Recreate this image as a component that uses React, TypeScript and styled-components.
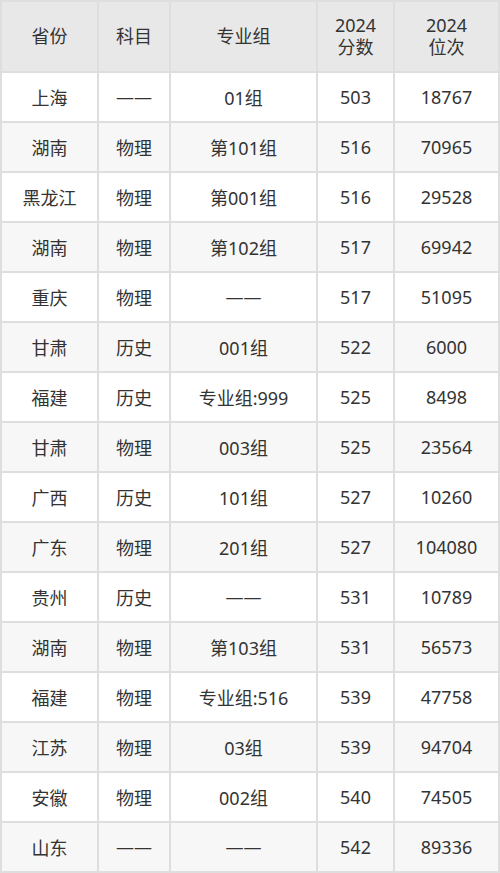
import React from 'react'
import styled, { createGlobalStyle } from 'styled-components'

const GlobalStyle = createGlobalStyle`
    html, body {
        margin: 0;
        padding: 0;
        background: #ffffff;
    }
`

const headers = ['省份', '科目', '专业组', '2024\n分数', '2024\n位次']

const rows: string[][] = [
    ['上海', '——', '01组', '503', '18767'],
    ['湖南', '物理', '第101组', '516', '70965'],
    ['黑龙江', '物理', '第001组', '516', '29528'],
    ['湖南', '物理', '第102组', '517', '69942'],
    ['重庆', '物理', '——', '517', '51095'],
    ['甘肃', '历史', '001组', '522', '6000'],
    ['福建', '历史', '专业组:999', '525', '8498'],
    ['甘肃', '物理', '003组', '525', '23564'],
    ['广西', '历史', '101组', '527', '10260'],
    ['广东', '物理', '201组', '527', '104080'],
    ['贵州', '历史', '——', '531', '10789'],
    ['湖南', '物理', '第103组', '531', '56573'],
    ['福建', '物理', '专业组:516', '539', '47758'],
    ['江苏', '物理', '03组', '539', '94704'],
    ['安徽', '物理', '002组', '540', '74505'],
    ['山东', '——', '——', '542', '89336'],
]

export default function App() {
    return (
        <>
            <GlobalStyle />
            <Table>
                {headers.map((h) => (
                    <HeadCell key={h}>{h}</HeadCell>
                ))}
                {rows.map((row, i) =>
                    row.map((v, j) => (
                        <Cell key={`${i}-${j}`} $alt={i % 2 === 1}>
                            {v}
                        </Cell>
                    ))
                )}
            </Table>
        </>
    )
}

const Table = styled.div`
    width: 500px;
    height: 873px;
    box-sizing: border-box;
    display: grid;
    grid-template-columns: 95px 70px 145px 75px 103px;
    grid-template-rows: 69px repeat(16, 48px);
    gap: 2px;
    padding: 2px;
    background: #dedede;
    font-family: "Noto Sans", "Noto Sans CJK SC", sans-serif;
    font-size: 18px;
    color: #333333;
`

const HeadCell = styled.div`
    background: #e8e8e8;
    display: flex;
    align-items: center;
    justify-content: center;
    text-align: center;
    white-space: pre-line;
    line-height: 1.17;
`

const Cell = styled.div<{ $alt: boolean }>`
    background: ${(p) => (p.$alt ? '#f7f7f7' : '#ffffff')};
    display: flex;
    align-items: center;
    justify-content: center;
    text-align: center;
    white-space: nowrap;
`
